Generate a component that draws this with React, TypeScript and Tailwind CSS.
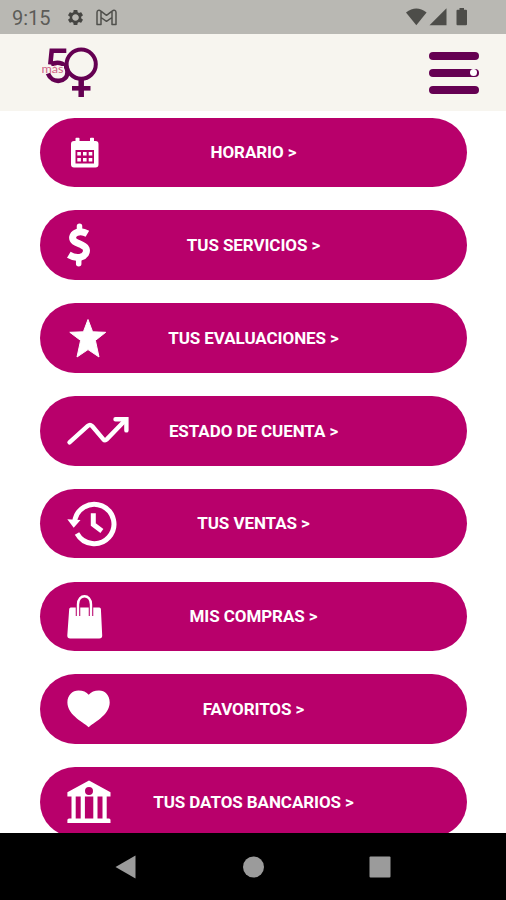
import type { ReactNode } from "react";

interface MenuItem {
  label: string;
  icon: ReactNode;
}

// every icon is drawn on the same 100x70 area at the left end of its button
const menuItems: MenuItem[] = [
  {
    label: "HORARIO >",
    icon: (
      <>
        <path
          fillRule="evenodd"
          d="M34 23h1.500v-2.500q0-.8.8-.8h2.400q.8 0 .8.8V23h10.500v-2.500q0-.8.8-.8h2.400q.8 0 .8.8V23h1.500q3 0 3 3v20.500q0 3-3 3H34q-3 0-3-3V26q0-3 3-3ZM35.500 32v13.500h18.500V32Z"
        />
        <path d="M37.300 34h3.600v3.600h-3.600ZM43 34h3.600v3.600H43ZM48.700 34h3.600v3.600h-3.600ZM37.300 40h3.600v3.600h-3.600ZM43 40h3.600v3.600H43ZM48.700 40h3.600v3.600h-3.600Z" />
      </>
    ),
  },
  {
    label: "TUS SERVICIOS >",
    icon: (
      <g fill="none" stroke="#fff">
        <path
          strokeWidth="7"
          d="M47.400 23.700C44.500 22 40 21 36.500 22.600C32 24.600 31.500 29 34.600 31.500C37.800 34 44 34.600 46 38.500C47.500 42.300 45 46 40.500 47.200C36.500 48 32.500 47 28.800 44.800"
        />
        <path
          strokeWidth="5.500"
          strokeLinecap="round"
          d="M39.500 16.200v5M38.700 49v4.800"
        />
      </g>
    ),
  },
  {
    label: "TUS EVALUACIONES >",
    icon: (
      <path
        stroke="#fff"
        strokeLinejoin="round"
        d="m48 16.500 4.600 12.300 13.100.5-10.300 8.100 3.600 16.600-11-7.400L37 54l3.600-16.600-10.800-8.100 13.600-.5Z"
      />
    ),
  },
  {
    label: "ESTADO DE CUENTA >",
    icon: (
      <g
        fill="none"
        stroke="#fff"
        strokeWidth="4.400"
        strokeLinecap="round"
        strokeLinejoin="round"
      >
        <path d="M29.500 46.300 47.800 29.900q2.200-1.900 4.300.1l11.300 13.400q1.600 1.700 3.300 0L85 24.500" />
        <path strokeLinejoin="miter" d="M75.500 23.200h10.900v11.200" />
      </g>
    ),
  },
  {
    label: "TUS VENTAS >",
    icon: (
      <>
        <path
          fill="none"
          stroke="#fff"
          strokeWidth="5"
          d="M34.600 33.500A19.700 19.700 0 1 1 37 44.500"
        />
        <path d="M27.300 30.300 40.500 31l-6.800 7.800Z" />
        <path
          fill="none"
          stroke="#fff"
          strokeWidth="5"
          d="M53.300 24.300v11.200l8.600 6.400"
        />
      </>
    ),
  },
  {
    label: "MIS COMPRAS >",
    icon: (
      <>
        <path d="M30.800 25.500h28.500q1.500 0 1.600 1.500l1.300 26.500q.1 3-2.900 3H30.200q-3 0-2.900-3L29.200 27q.1-1.500 1.600-1.500Z" />
        <path
          fill="none"
          stroke="#b8006b"
          strokeWidth="4.500"
          d="M38 25v9M51 25v9"
        />
        <path
          fill="none"
          stroke="#fff"
          strokeWidth="2.400"
          d="M38 34V22.500c0-11 13-11 13 0V34"
        />
      </>
    ),
  },
  {
    label: "FAVORITOS >",
    icon: (
      <path d="M48.700 53.300C45 49 27.400 41.500 27.400 28.500C27.400 21 32.500 16.500 38.500 16.500C43 16.500 46.500 18 48.700 20.800C51 18 54.500 16.500 59 16.500C65 16.500 69.700 21 69.700 28.500C69.700 41.500 52.500 49 48.700 53.300Z" />
    ),
  },
  {
    label: "TUS DATOS BANCARIOS >",
    icon: (
      <>
        <path
          fillRule="evenodd"
          d="m49 13.500 21.500 11.700V29.500H27.400v-4.300ZM49 20a4 4 0 1 0 0 8 4 4 0 0 0 0-8Z"
        />
        <path d="M31.500 29h4.200v23h-4.200ZM40.700 29h4.200v23h-4.200ZM53.300 29h4.200v23h-4.200ZM62.500 29h4.200v23h-4.200ZM29 51.500h40q1.500 0 1.500 1.500v3H27.400v-3q0-1.500 1.600-1.500Z" />
      </>
    ),
  },
];

const StatusBar = () => (
  <div className="flex h-[34px] shrink-0 items-center bg-[#b9b8b3] pl-3 pr-[38px] text-[#5c5c58]">
    <span className="w-[54px] pt-0.5 text-[20px]">9:15</span>
    <svg width="19" height="19" viewBox="0 0 24 24" fill="#454542">
      <path
        fillRule="evenodd"
        d="M19.140 12.940c.04-.3.060-.61.060-.94 0-.32-.02-.64-.07-.94l2.030-1.580c.18-.14.230-.41.120-.61l-1.920-3.320c-.12-.22-.37-.29-.59-.22l-2.390.960c-.5-.38-1.030-.7-1.620-.94l-.36-2.540c-.04-.24-.24-.41-.48-.41h-3.840c-.24 0-.43.170-.47.410l-.36 2.540c-.59.240-1.130.570-1.620.940l-2.390-.96c-.22-.08-.47 0-.59.220L2.740 8.870c-.12.210-.08.470.120.610l2.030 1.580c-.05.300-.09.630-.09.940s.02.640.070.940l-2.030 1.580c-.18.140-.23.410-.12.610l1.920 3.320c.12.220.37.290.59.220l2.390-.96c.5.380 1.030.700 1.620.940l.36 2.540c.05.240.24.410.48.410h3.840c.24 0 .44-.17.47-.41l.36-2.540c.59-.24 1.130-.56 1.620-.94l2.390.960c.22.080.47 0 .59-.22l1.920-3.320c.12-.22.070-.47-.12-.61l-2.010-1.580zM12 16.200c-2.300 0-4.200-1.900-4.200-4.200s1.900-4.200 4.200-4.200 4.200 1.900 4.200 4.200-1.900 4.200-4.200 4.200z"
      />
    </svg>
    <svg
      className="ml-[11px]"
      width="21"
      height="17"
      viewBox="0 0 21 17"
      fill="none"
      stroke="#50504c"
      strokeWidth="1.500"
      strokeLinejoin="round"
    >
      <path d="M1 3.500C1 1.300 3 .5 4.600 1.800L10.500 6.300 16.400 1.800C18 .5 20 1.300 20 3.500V15.500H16V8.500L10.500 12.300 5 8.500V15.500H1ZM5 8.500V2.600M16 8.500V2.600" />
    </svg>
    <svg
      className="ml-auto"
      width="62"
      height="20"
      viewBox="0 0 62 20"
      fill="#4d4d49"
    >
      <path d="M0 5.500Q10.300-2.500 20.600 5.500L10.300 18.300Z" />
      <path d="M40.500 1.300v17H23.500Z" />
      <path d="M53.500 1h4.500v1.800h2q1 0 1 1v13.500q0 1-1 1h-8.500q-1 0-1-1V3.800q0-1 1-1h2Z" />
    </svg>
  </div>
);

const Logo = () => (
  <svg width="58" height="52" viewBox="0 0 58 52" fill="none">
    <g stroke="#650052" strokeWidth="4.600">
      <path d="M24.300 3.800H9.700L8.300 17.500M9 17.800C16 13.200 25.500 17 25.500 25C25.500 35.500 10 37.500 6 26.500" />
      <circle cx="39.200" cy="17.200" r="14.600" strokeWidth="4" />
      <path strokeWidth="5.500" d="M39.200 32v18" />
      <path d="M30 41.300h18.500" />
    </g>
    <path stroke="#f7f5ef" strokeWidth="7" d="M0 22.500h22" />
    <text
      x="-.5"
      y="26"
      fill="#cf6285"
      fontSize="12"
      textLength="22"
      lengthAdjust="spacingAndGlyphs"
      className="font-['Lato',sans-serif]"
    >
      más
    </text>
  </svg>
);

const Header = () => (
  <header className="flex h-[77px] shrink-0 items-center justify-between bg-[#f7f5ef] pl-[42px] pr-[27px]">
    <Logo />
    <button aria-label="Menú" className="flex flex-col gap-[9px]">
      <span className="h-2 w-[50px] rounded-full bg-[#650052]" />
      <span className="flex h-2 w-[50px] items-center justify-end rounded-full bg-[#650052] pr-0.5">
        <span className="size-[7px] rounded-full bg-white" />
      </span>
      <span className="h-2 w-[50px] rounded-full bg-[#650052]" />
    </button>
  </header>
);

const MenuButton = ({ label, icon }: MenuItem) => (
  <button className="grid h-[69.600px] w-[427px] shrink-0 grid-cols-1 items-center rounded-full bg-[#b8006b]">
    <svg
      className="col-start-1 row-start-1"
      width="100"
      height="70"
      viewBox="0 0 100 70"
      fill="#fff"
    >
      {icon}
    </svg>
    <span className="col-start-1 row-start-1 pt-px text-center text-[17px] font-bold tracking-[-0.080px] text-white">
      {label}
    </span>
  </button>
);

const NavBar = () => (
  <nav className="flex h-[67px] shrink-0 items-center bg-black pl-[115px]">
    <svg width="276" height="24" viewBox="0 0 276 24" fill="#9b9b9b">
      <path d="M.500 12 20.500.500v23Z" />
      <circle cx="138.500" cy="12" r="10.500" />
      <rect x="254.500" y="1.500" width="21" height="21" rx="1" />
    </svg>
  </nav>
);

const App = () => {
  return (
    <div className="flex h-[900px] w-[506px] flex-col overflow-hidden bg-white font-['Roboto',sans-serif]">
      <StatusBar />
      <Header />
      <main className="flex min-h-0 flex-1 flex-col gap-[23.200px] overflow-hidden pl-10 pt-[6.600px]">
        {menuItems.map((item) => (
          <MenuButton key={item.label} {...item} />
        ))}
      </main>
      <NavBar />
    </div>
  );
};

export default App;
